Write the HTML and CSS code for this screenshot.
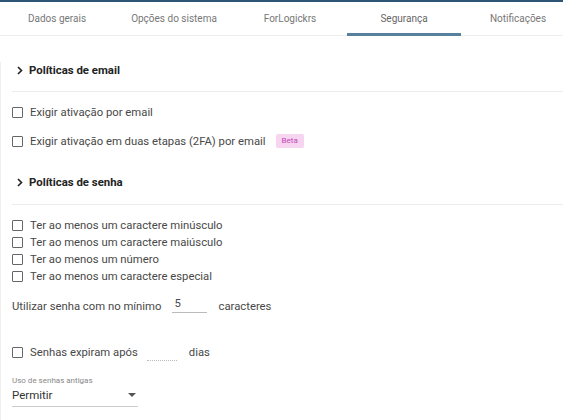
FILE: index.html
```html
<!DOCTYPE html>
<html lang="pt">
<head>
<meta charset="utf-8">
<link rel="stylesheet" href="styles.css">
</head>
<body>
<div class="topbar"></div>
<nav class="tabs">
  <div class="tab t0">Dados gerais</div>
  <div class="tab t1">Opções do sistema</div>
  <div class="tab t2">ForLogickrs</div>
  <div class="tab t3 active">Segurança</div>
  <div class="tab t4">Notificações</div>
</nav>
<main class="content">
  <div class="section-head head-email">
    <svg class="chev" width="6" height="9" viewBox="0 0 6 9"><path d="M1 1l3.5 3.5L1 8" fill="none" stroke="#222" stroke-width="1.6"/></svg>
    <span>Políticas de email</span>
  </div>
  <div class="divider"></div>
  <label class="check row-email"><span class="box"></span>Exigir ativação por email</label>
  <label class="check row-email second"><span class="box"></span>Exigir ativação em duas etapas (2FA) por email <span class="badge">Beta</span></label>

  <div class="section-head head-senha">
    <svg class="chev" width="6" height="9" viewBox="0 0 6 9"><path d="M1 1l3.5 3.5L1 8" fill="none" stroke="#222" stroke-width="1.6"/></svg>
    <span>Políticas de senha</span>
  </div>
  <div class="divider divider-senha"></div>
  <div class="checklist">
    <label class="check tight"><span class="box"></span>Ter ao menos um caractere minúsculo</label>
    <label class="check tight"><span class="box"></span>Ter ao menos um caractere maiúsculo</label>
    <label class="check tight"><span class="box"></span>Ter ao menos um número</label>
    <label class="check tight"><span class="box"></span>Ter ao menos um caractere especial</label>
  </div>

  <div class="inline-row min-row">
    <span>Utilizar senha com no mínimo</span>
    <span class="num-input">5</span>
    <span>caracteres</span>
  </div>

  <div class="inline-row exp-row">
    <span class="box"></span>
    <span>Senhas expiram após</span>
    <span class="dotted-input"></span>
    <span>dias</span>
  </div>

  <div class="select-field">
    <div class="select-label">Uso de senhas antigas</div>
    <div class="select-value"><span>Permitir</span><span class="caret"></span></div>
  </div>
</main>
</body>
</html>
```
FILE: styles.css
```css
* { box-sizing: border-box; }
html, body { margin: 0; padding: 0; background: #fff; }
body {
  font-family: Roboto, "Noto Sans", sans-serif;
  color: #444;
  width: 563px;
  height: 420px;
  overflow: hidden;
}
.topbar { height: 2px; background: #2d5676; }
.tabs {
  display: flex;
  height: 34px;
  border-bottom: 1px solid #eeeeee;
}
.tab {
  flex: none;
  position: relative;
  text-align: center;
  font-size: 10px;
  line-height: 33px;
  color: #777;
  white-space: nowrap;
}
.t0 { width: 114px; }
.t1 { width: 120px; }
.t2 { width: 112px; }
.t3 { width: 116px; }
.t4 { width: 112px; }
.tab.active { color: #666; }
.tab.active::after {
  content: "";
  position: absolute;
  left: 1px;
  right: 1px;
  bottom: -1px;
  height: 3px;
  background: #58809c;
}
.content {
  padding-left: 11px;
  border-left: 1px solid #f0f0f0;
  height: 384px;
}
.section-head {
  display: flex;
  align-items: center;
  height: 16px;
  font-size: 11.4px;
  font-weight: 700;
  color: #222;
}
.section-head .chev { margin-left: 5px; margin-right: 6px; }
.head-email { margin-top: 26px; }
.head-senha { margin-top: 25px; }
.divider { height: 1px; background: #ececec; margin-top: 13px; }
.divider-senha { margin-top: 14px; }
.check {
  display: flex;
  align-items: center;
  font-size: 11.3px;
  color: #484848;
  height: 16px;
}
.row-email { margin-top: 12px; }
.row-email.second { margin-top: 13px; }
.box {
  display: inline-block;
  width: 11px;
  height: 11px;
  border: 1.5px solid #666;
  border-radius: 1px;
  margin-right: 7px;
  flex: none;
}
.badge {
  display: inline-block;
  margin-left: 10px;
  background: #f7d5f1;
  color: #c247b3;
  font-size: 8px;
  line-height: 14px;
  padding: 0 6px;
  border-radius: 2px;
}
.checklist { margin-top: 12px; }
.check.tight { height: 17px; }
.inline-row {
  display: flex;
  align-items: center;
  font-size: 11.3px;
  color: #484848;
  height: 18px;
}
.min-row { margin-top: 12px; }
.num-input {
  width: 35px;
  margin-left: 11px;
  margin-right: 11px;
  padding-left: 2px;
  border-bottom: 1px solid #bbb;
  line-height: 17px;
  position: relative;
  top: -2px;
}
.exp-row { margin-top: 28px; }
.dotted-input {
  width: 30px;
  height: 16px;
  margin-left: 9px;
  margin-right: 12px;
  border-bottom: 1px dotted #bbb;
  position: relative;
  top: 1px;
}
.select-field { margin-top: 15px; width: 126px; }
.select-label { font-size: 8px; color: #888; line-height: 10px; }
.select-value {
  display: flex;
  justify-content: space-between;
  align-items: center;
  font-size: 11.5px;
  color: #333;
  height: 20px;
  padding-bottom: 3px;
  border-bottom: 1px solid #ccc;
  margin-top: 1px;
}
.caret {
  width: 0; height: 0;
  border-left: 4px solid transparent;
  border-right: 4px solid transparent;
  border-top: 4px solid #555;
  margin-right: 2px;
}
```
